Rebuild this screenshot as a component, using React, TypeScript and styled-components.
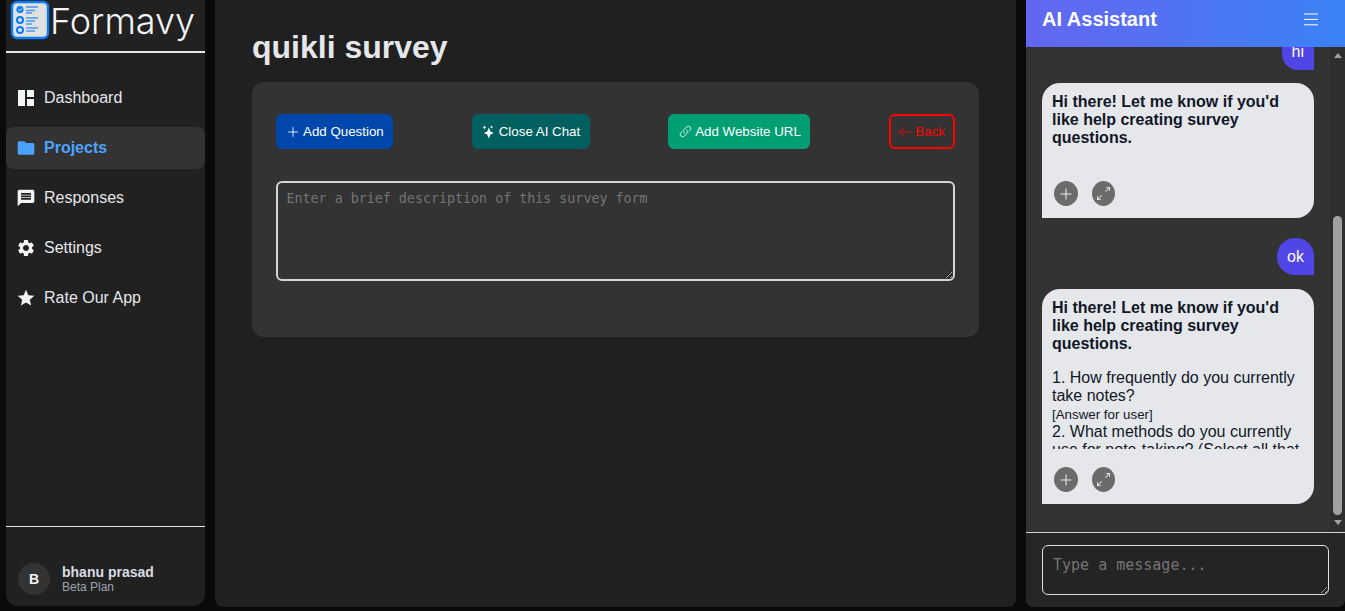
import { useLayoutEffect, useRef } from "react";
import styled, { createGlobalStyle } from "styled-components";
import { MdFolder, MdMessage, MdSettings, MdStar } from "react-icons/md";
import { BsArrowsAngleExpand } from "react-icons/bs";
import { HiOutlineArrowLeft, HiOutlineLink, HiOutlinePlus } from "react-icons/hi2";

const GlobalStyle = createGlobalStyle`
  * {
    box-sizing: border-box;
  }

  html,
  body {
    margin: 0;
    height: 100%;
    overflow: hidden;
    background: #0a0a0a;
    font-family: "Liberation Sans", Arial, sans-serif;
  }
`;

const Page = styled.div`
  height: 611px;
  display: flex;
  align-items: flex-start;
  padding-left: 6px;
`;

const Sidebar = styled.aside`
  width: 199px;
  height: 606px;
  flex-shrink: 0;
  display: flex;
  flex-direction: column;
  background: #212121;
  border-radius: 0 0 12px 12px;
  color: #f3f4f6;
`;

const Brand = styled.div`
  height: 53px;
  display: flex;
  align-items: flex-start;
  padding-left: 4px;
  border-bottom: 2px solid #e5e5e5;
`;

const BrandName = styled.span`
  font-family: Inter, sans-serif;
  font-size: 36px;
  font-weight: 300;
  line-height: 42px;
  color: #f3f4f6;
`;

const Nav = styled.nav`
  flex: 1;
  display: flex;
  flex-direction: column;
  gap: 8px;
  padding-top: 24px;
`;

const NavItem = styled.a<{ $active?: boolean }>`
  height: 42px;
  display: flex;
  align-items: center;
  gap: 8px;
  padding-left: 10px;
  border-radius: 8px;
  font-size: 16px;
  font-weight: ${(p) => (p.$active ? 700 : 400)};
  color: ${(p) => (p.$active ? "#4aa3ff" : "#e5e7eb")};
  background: ${(p) => (p.$active ? "#333333" : "transparent")};

  svg {
    width: 20px;
    height: 20px;
    flex-shrink: 0;
    color: ${(p) => (p.$active ? "#4aa3ff" : "#f3f4f6")};
  }
`;

const Profile = styled.div`
  height: 80px;
  display: flex;
  align-items: flex-end;
  gap: 12px;
  padding: 0 0 11px 12px;
  border-top: 1px solid #e5e5e5;
`;

const Avatar = styled.div`
  width: 32px;
  height: 32px;
  border-radius: 50%;
  display: flex;
  align-items: center;
  justify-content: center;
  background: #333333;
  font-size: 14px;
  font-weight: 700;
`;

const ProfileText = styled.div`
  display: flex;
  flex-direction: column;
  margin-bottom: 1px;
`;

const ProfileName = styled.span`
  font-size: 14px;
  font-weight: 700;
  line-height: 16px;
  color: #d9dde3;
`;

const ProfilePlan = styled.span`
  font-size: 12px;
  line-height: 14px;
  color: #9ca3af;
`;

const Main = styled.main`
  width: 801px;
  height: 607px;
  flex-shrink: 0;
  margin-left: 10px;
  padding: 29px 37px 0;
  background: #202020;
  border-radius: 0 0 8px 8px;
`;

const Title = styled.h1`
  margin: 0 0 16px;
  font-size: 32px;
  font-weight: 700;
  line-height: 37px;
  color: #e5e7eb;
`;

const Card = styled.section`
  height: 255px;
  padding: 32px 24px;
  background: #333333;
  border-radius: 12px;
`;

const Toolbar = styled.div`
  display: flex;
  justify-content: space-between;
  margin-bottom: 32px;
`;

const ActionButton = styled.button<{ $bg: string }>`
  height: 35px;
  display: inline-flex;
  align-items: center;
  gap: 3px;
  padding: 0 9.5px 0 10px;
  border: 0;
  border-radius: 6px;
  background: ${(p) => p.$bg};
  color: #ffffff;
  font-family: inherit;
  font-size: 13.33px;

  svg {
    width: 14px;
    height: 14px;
    flex-shrink: 0;
  }
`;

const BackButton = styled(ActionButton)`
  border: 2px solid #ff0000;
  color: #ff0000;
  padding: 0 8px 0 7.5px;
`;

const DescriptionInput = styled.textarea`
  display: block;
  width: 100%;
  height: 100px;
  padding: 8px 8.5px;
  background: #333333;
  border: 2px solid #d4d4d4;
  border-radius: 6px;
  color: #f3f4f6;
  font-family: monospace;
  font-size: 13.33px;
  outline: none;

  &::placeholder {
    color: #757575;
  }
`;

const Chat = styled.aside`
  width: 319px;
  height: 607px;
  flex-shrink: 0;
  margin-left: 10px;
  display: flex;
  flex-direction: column;
  background: #333333;
  border-radius: 0 0 8px 8px;
  overflow: hidden;
`;

const ChatHeader = styled.header`
  height: 47px;
  flex-shrink: 0;
  display: flex;
  align-items: center;
  justify-content: space-between;
  padding: 0 27px 8px 16px;
  background: linear-gradient(90deg, #6366f1, #3b82f6);
  color: #ffffff;
  font-size: 20px;
  font-weight: 700;
`;

const ChatBody = styled.div`
  flex: 1;
  min-height: 0;
  display: flex;
`;

const Messages = styled.div`
  flex: 1;
  min-width: 0;
  overflow-y: scroll;
  scrollbar-width: none;
  padding: 239px 16px 28px;
  display: flex;
  flex-direction: column;
  align-items: flex-end;
`;

// the browser's own scrollbar does not show in the capture, so the rail is drawn
const ScrollRail = styled.div`
  width: 15px;
  flex-shrink: 0;
  display: flex;
  flex-direction: column;
  align-items: center;
  padding-top: 6px;
  background: #2e2e2e;
`;

const ScrollArrow = styled.div<{ $down?: boolean }>`
  width: 0;
  height: 0;
  margin-top: ${(p) => (p.$down ? 5 : 0)}px;
  border-left: 4.5px solid transparent;
  border-right: 4.5px solid transparent;
  border-bottom: ${(p) => (p.$down ? "0" : "5px solid #a0a0a0")};
  border-top: ${(p) => (p.$down ? "5px solid #a0a0a0" : "0")};
`;

const ScrollThumb = styled.div`
  width: 9px;
  height: 299px;
  margin-top: 158px;
  background: #a0a0a0;
  border-radius: 5px;
`;

const UserBubble = styled.div<{ $gap: number }>`
  flex-shrink: 0;
  padding: 9px 10px;
  margin-bottom: ${(p) => p.$gap}px;
  background: #4f46e5;
  border-radius: 18px 18px 0 18px;
  color: #ffffff;
  font-size: 16px;
  line-height: 19px;
`;

const BotBubble = styled.div<{ $gap?: number }>`
  width: 272px;
  flex-shrink: 0;
  padding: 10px 10px 12px;
  margin-bottom: ${(p) => p.$gap ?? 0}px;
  background: #e5e7eb;
  border-radius: 18px 18px 18px 0;
  color: #111827;
  font-size: 16px;
  line-height: 18px;
`;

const BotText = styled.div<{ $height: number }>`
  height: ${(p) => p.$height}px;
  margin-bottom: 18px;
  overflow: hidden;
`;

const Lead = styled.p`
  margin: 0 0 16px;
  font-weight: 700;
`;

const Note = styled.div`
  padding-top: 1px;
  font-size: 13.33px;
  line-height: 17px;
`;

const BubbleActions = styled.div`
  display: flex;
  gap: 14px;
  padding-left: 2px;
`;

const RoundButton = styled.button<{ $wide?: boolean }>`
  width: ${(p) => (p.$wide ? 23 : 24)}px;
  height: 25px;
  padding: 0;
  border: 0;
  border-radius: 50%;
  display: flex;
  align-items: center;
  justify-content: center;
  background: #6b6b6b;
  color: #f3f0e8;

  svg {
    width: ${(p) => (p.$wide ? 13 : 16)}px;
    height: ${(p) => (p.$wide ? 13 : 16)}px;
  }
`;

const Composer = styled.div`
  height: 75px;
  flex-shrink: 0;
  padding: 12px 16px;
  background: #262626;
  border-top: 1px solid #d4d4d4;
`;

const MessageInput = styled.textarea`
  display: block;
  width: 287px;
  height: 50px;
  padding: 10px 10px;
  background: #242424;
  border: 1px solid #e0e0e0;
  border-radius: 6px;
  color: #f3f4f6;
  font-family: monospace;
  font-size: 15px;
  outline: none;

  &::placeholder {
    color: #757575;
  }
`;

const LogoMark = () => (
  <svg width="40" height="40" viewBox="0 0 40 40" aria-hidden="true">
    <rect x="2" y="2" width="36" height="36" rx="5" fill="#e1e1e1" stroke="#0a7cf5" strokeWidth="2.4" />
    <circle cx="10" cy="9.5" r="3.6" fill="#0a7cf5" />
    <path d="M8.4 9.5l1.2 1.2 2.1-2.2" fill="none" stroke="#fff" strokeWidth="1" />
    <circle cx="10" cy="20" r="3" fill="none" stroke="#0a7cf5" strokeWidth="2" />
    <circle cx="10" cy="30" r="3" fill="none" stroke="#0a7cf5" strokeWidth="2" />
    <path
      d="M16 7h12M16 10.5h9M16 13h6M16 18h12M16 21h9M16 24h6M16 28h12M16 31h9"
      stroke="#4a9bf0"
      strokeWidth="1.5"
    />
  </svg>
);

const DashboardIcon = () => (
  <svg viewBox="0 0 20 20" fill="currentColor" aria-hidden="true">
    <path d="M2 2h7v16H2zM11 2h7v7h-7zM11 11h7v7h-7z" />
  </svg>
);

const StarsIcon = () => (
  <svg viewBox="0 0 14 14" fill="currentColor" aria-hidden="true">
    <path d="M6.8 2.4L8.4 6.4l3.4 1.6-3.4 1.6-1.6 4-1.6-4L1.8 8l3.4-1.6z" />
    <path d="M2.5.3l.6 1.4 1.3.6-1.3.6-.6 1.6-.6-1.6-1.3-.6 1.3-.6z" />
    <path d="M9.6.3l.5 1.2 1.2.5-1.2.5-.5 1.2-.5-1.2-1.2-.5 1.2-.5z" />
  </svg>
);

const MenuIcon = () => (
  <svg width="14" height="13" viewBox="0 0 14 13" fill="none" stroke="currentColor" aria-hidden="true">
    <path d="M0 1h14M0 6.4h14M0 11.8h14" />
  </svg>
);

const SmallLink = styled(HiOutlineLink)`
  && {
    width: 13px;
    height: 13px;
    margin-left: 1px;
  }
`;

const BubbleButtons = () => (
  <BubbleActions>
    <RoundButton>
      <HiOutlinePlus />
    </RoundButton>
    <RoundButton $wide>
      <BsArrowsAngleExpand />
    </RoundButton>
  </BubbleActions>
);

const navItems = [
  { label: "Dashboard", icon: <DashboardIcon /> },
  { label: "Projects", icon: <MdFolder />, active: true },
  { label: "Responses", icon: <MdMessage /> },
  { label: "Settings", icon: <MdSettings /> },
  { label: "Rate Our App", icon: <MdStar /> },
];

export default function App() {
  const messagesRef = useRef<HTMLDivElement>(null);

  useLayoutEffect(() => {
    const el = messagesRef.current;
    if (el) el.scrollTop = el.scrollHeight;
  }, []);

  return (
    <Page>
      <GlobalStyle />
      <Sidebar>
        <Brand>
          <LogoMark />
          <BrandName>Formavy</BrandName>
        </Brand>
        <Nav>
          {navItems.map((item) => (
            <NavItem key={item.label} $active={item.active}>
              {item.icon}
              {item.label}
            </NavItem>
          ))}
        </Nav>
        <Profile>
          <Avatar>B</Avatar>
          <ProfileText>
            <ProfileName>bhanu prasad</ProfileName>
            <ProfilePlan>Beta Plan</ProfilePlan>
          </ProfileText>
        </Profile>
      </Sidebar>

      <Main>
        <Title>quikli survey</Title>
        <Card>
          <Toolbar>
            <ActionButton $bg="#0047ab">
              <HiOutlinePlus />
              Add Question
            </ActionButton>
            <ActionButton $bg="#005f5f">
              <StarsIcon />
              Close AI Chat
            </ActionButton>
            <ActionButton $bg="#009e73">
              <SmallLink />
              Add Website URL
            </ActionButton>
            <BackButton $bg="transparent">
              <HiOutlineArrowLeft />
              Back
            </BackButton>
          </Toolbar>
          <DescriptionInput placeholder="Enter a brief description of this survey form" />
        </Card>
      </Main>

      <Chat>
        <ChatHeader>
          AI Assistant
          <MenuIcon />
        </ChatHeader>
        <ChatBody>
          <Messages ref={messagesRef}>
            <UserBubble $gap={13}>hi</UserBubble>
            <BotBubble $gap={20}>
              <BotText $height={70}>
                <Lead>
                  Hi there! Let me know if you'd like help creating survey questions.
                </Lead>
              </BotText>
              <BubbleButtons />
            </BotBubble>
            <UserBubble $gap={14}>ok</UserBubble>
            <BotBubble>
              <BotText $height={150}>
                <Lead>
                  Hi there! Let me know if you'd like help creating survey questions.
                </Lead>
                1. How frequently do you currently take notes?
                <Note>[Answer for user]</Note>
                2. What methods do you currently use for note-taking? (Select all that apply)
              </BotText>
              <BubbleButtons />
            </BotBubble>
          </Messages>
          <ScrollRail>
            <ScrollArrow />
            <ScrollThumb />
            <ScrollArrow $down />
          </ScrollRail>
        </ChatBody>
        <Composer>
          <MessageInput placeholder="Type a message..." />
        </Composer>
      </Chat>
    </Page>
  );
}
